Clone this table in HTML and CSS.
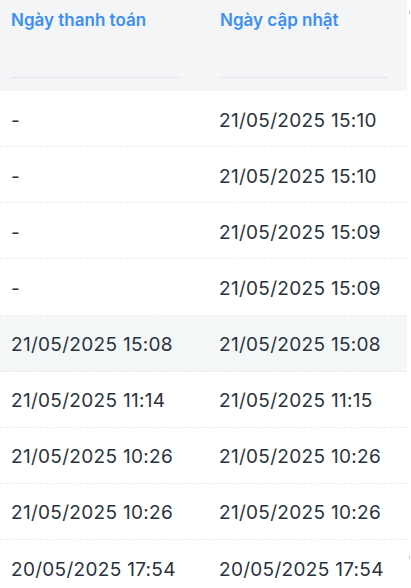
FILE: index.html
```html
<!DOCTYPE html>
<html lang="vi">
<head>
<meta charset="utf-8">
<link rel="stylesheet" href="styles.css">
</head>
<body>
<div class="wrap">
  <div class="table">
    <div class="row head">
      <div class="cell c1"><span class="htext">Ngày thanh toán</span><span class="dots"></span></div>
      <div class="cell c2"><span class="htext">Ngày cập nhật</span><span class="dots"></span></div>
    </div>
    <div class="row"><div class="cell c1">-</div><div class="cell c2">21/05/2025 15:10</div></div>
    <div class="row"><div class="cell c1">-</div><div class="cell c2">21/05/2025 15:10</div></div>
    <div class="row"><div class="cell c1">-</div><div class="cell c2">21/05/2025 15:09</div></div>
    <div class="row"><div class="cell c1">-</div><div class="cell c2">21/05/2025 15:09</div></div>
    <div class="row hl"><div class="cell c1">21/05/2025 15:08</div><div class="cell c2">21/05/2025 15:08</div></div>
    <div class="row"><div class="cell c1">21/05/2025 11:14</div><div class="cell c2">21/05/2025 11:15</div></div>
    <div class="row"><div class="cell c1">21/05/2025 10:26</div><div class="cell c2">21/05/2025 10:26</div></div>
    <div class="row"><div class="cell c1">21/05/2025 10:26</div><div class="cell c2">21/05/2025 10:26</div></div>
    <div class="row"><div class="cell c1">20/05/2025 17:54</div><div class="cell c2">20/05/2025 17:54</div></div>
  </div>
  <div class="rail"><span class="tick top"></span><span class="tick bottom"></span></div>
</div>
</body>
</html>
```
FILE: styles.css
```css
html, body {
  margin: 0;
  padding: 0;
  background: #ffffff;
  overflow: hidden;
}
.wrap {
  display: flex;
  width: 411px;
  height: 588px;
}
.table {
  width: 407px;
  flex: none;
}
.rail {
  flex: 1;
  position: relative;
}
.tick {
  position: absolute;
  left: 2px;
  width: 1px;
  height: 3px;
  background: #c8c8c8;
}
.tick.top { top: 11px; }
.tick.bottom { top: 556px; }
.row {
  display: flex;
  box-sizing: border-box;
  height: 56.125px;
  padding-top: 3px;
  align-items: center;
  border-bottom: 1px dashed #ececef;
  font-family: "Inter", "Noto Sans", sans-serif;
  font-size: 19px;
  letter-spacing: 0.3px;
  color: #2b323d;
}
.row.hl { background: #f3f7f7; }
.row.head {
  height: 91px;
  padding-top: 0;
  align-items: stretch;
  background: #f4f5f7;
  border-bottom: none;
  letter-spacing: 0;
}
.cell { box-sizing: border-box; }
.c1 { width: 208px; padding-left: 11px; }
.c2 { width: 199px; padding-left: 11px; }
.head .cell {
  display: flex;
  flex-direction: column;
  padding-top: 9px;
}
.head .c1 { padding-left: 11px; padding-right: 28px; }
.head .c2 { padding-left: 12px; padding-right: 20px; }
.htext {
  font-family: "Inter", "Noto Sans", sans-serif;
  font-weight: 600;
  font-size: 17px;
  line-height: 22px;
  color: #3d8ff2;
}
.dots {
  margin-top: 46px;
  border-top: 1px dotted #d3d6dc;
}
```
